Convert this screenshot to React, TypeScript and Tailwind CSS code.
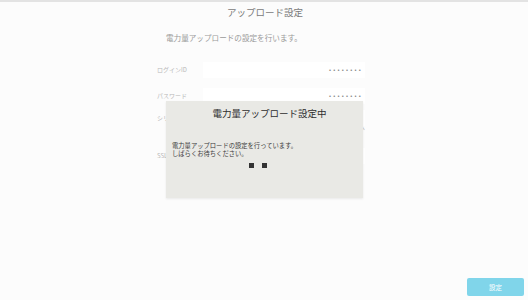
import React from "react";

const font = { fontFamily: '"Noto Sans CJK JP", "Noto Sans", sans-serif' };

function Row({ label, value, top }: { label: string; value: string; top: string }) {
  return (
    <div className={`flex items-center ${top}`}>
      <div className="w-[46px] text-[6px] text-[#b8b8b8] leading-none">{label}</div>
      <div className="flex-1 h-[16px] bg-white flex items-center justify-end pr-[2px] text-[6px] tracking-[2.2px] text-[#8a8a8a] leading-none">
        {value}
      </div>
    </div>
  );
}

export default function App() {
  return (
    <div style={font} className="relative w-[528px] h-[300px] bg-[#fcfcfc] border-t-2 border-[#e3e3e3] flex flex-col overflow-hidden">
      <div className="text-center text-[9.5px] text-[#7a7a7a] leading-none mt-[6px] pl-[2px]">アップロード設定</div>
      <div className="pl-[166px] mt-[16px] text-[7.6px] text-[#9a9a9a] leading-none">電力量アップロードの設定を行います。</div>
      <div className="ml-[157px] w-[208px] mt-[21px] flex flex-col">
        <Row label="ログインID" value="••••••••" top="" />
        <Row label="パスワード" value="••••••••" top="mt-[10px]" />
        <Row label="シリアル番号" value="" top="mt-[6px]" />
        <div className="flex justify-end text-[7px] text-[#c8c8c8] leading-none -mt-[2px]">ヘ</div>
        <Row label="SSL" value="" top="mt-[17px]" />
      </div>
      <div className="mt-auto flex justify-end pr-[4px] pb-[4px]">
        <div className="w-[57px] h-[18px] rounded-[2px] bg-[#80d5ea] flex items-center justify-center text-white text-[6.5px] leading-none">設定</div>
      </div>

      <div className="absolute left-[166px] top-[99px] w-[197px] h-[97px] bg-[#e9e9e5] shadow-[0_1px_2px_rgba(0,0,0,0.08)] flex flex-col">
        <div className="text-center text-[9.5px] text-[#2e2e2e] leading-none mt-[8px] pl-[10px]">電力量アップロード設定中</div>
        <div className="pl-[6px] mt-[23px] text-[6.3px] text-[#3a3a3a] leading-[8px]">
          <div>電力量アップロードの設定を行っています。</div>
          <div>しばらくお待ちください。</div>
        </div>
        <div className="flex justify-start gap-[8px] mt-[5px] pl-[83px]">
          <div className="w-[5px] h-[5px] bg-[#333]" />
          <div className="w-[5px] h-[5px] bg-[#333]" />
        </div>
      </div>
    </div>
  );
}
